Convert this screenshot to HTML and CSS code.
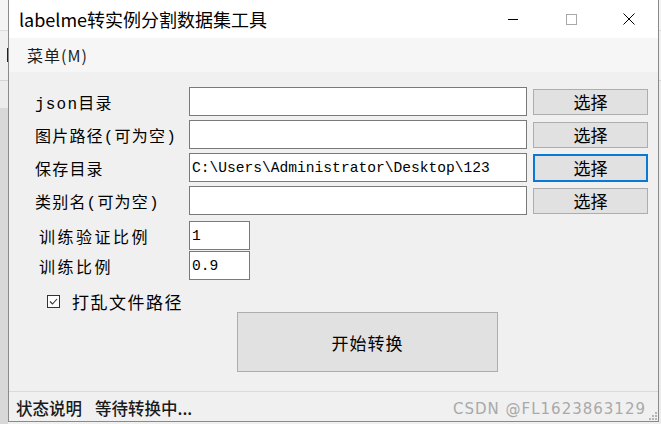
FILE: index.html
```html
<!DOCTYPE html>
<html lang="zh-CN">
<head>
<meta charset="utf-8">
<title>labelme转实例分割数据集工具</title>
<link rel="stylesheet" href="styles.css">
</head>
<body>
<div class="screen">
  <div class="edge-left"><span class="edge-mark"></span></div>
  <div class="window">
    <div class="titlebar">
      <span class="title">labelme转实例分割数据集工具</span>
      <div class="controls">
        <span class="ctl"><svg width="10" height="10" viewBox="0 0 10 10"><path d="M0 5.5H10" stroke="#000" stroke-width="1"/></svg></span>
        <span class="ctl"><svg width="11" height="11" viewBox="0 0 11 11"><rect x="0.5" y="0.5" width="10" height="10" fill="none" stroke="#a8a8a8" stroke-width="1"/></svg></span>
        <span class="ctl"><svg width="12" height="12" viewBox="0 0 12 12"><path d="M0.5 0.5L11.5 11.5M11.5 0.5L0.5 11.5" stroke="#000" stroke-width="1"/></svg></span>
      </div>
    </div>
    <div class="menubar"><span class="menu">菜单(M)</span></div>
    <div class="client">
      <div class="paths">
        <span class="label">json目录</span>
        <input class="field" type="text" value="">
        <button class="btn">选择</button>

        <span class="label">图片路径(可为空)</span>
        <input class="field" type="text" value="">
        <button class="btn">选择</button>

        <span class="label">保存目录</span>
        <input class="field" type="text" value="C:\Users\Administrator\Desktop\123">
        <button class="btn focus">选择</button>

        <span class="label">类别名(可为空)</span>
        <input class="field" type="text" value="">
        <button class="btn">选择</button>
      </div>
      <div class="ratios">
        <span class="label wide">训练验证比例</span>
        <input class="field small" type="text" value="1">
        <span class="label wide">训练比例</span>
        <input class="field small" type="text" value="0.9">
      </div>
      <div class="check">
        <svg class="box" width="13" height="13" viewBox="0 0 13 13"><rect x="0.5" y="0.5" width="12" height="12" fill="#fff" stroke="#333" stroke-width="1"/><path d="M3 6.5L5.5 9L10 4" fill="none" stroke="#333" stroke-width="1.1"/></svg>
        <span class="check-text">打乱文件路径</span>
      </div>
      <div class="start-row"><button class="start">开始转换</button></div>
      <div class="status">
        <span class="status-key">状态说明</span>
        <span class="status-val">等待转换中...</span>
      </div>
    </div>
    <span class="watermark">CSDN @FL1623863129</span>
    <svg class="grip" width="10" height="10" viewBox="0 0 10 10">
      <rect x="7" y="1" width="2" height="2" fill="#b4b4b4"/>
      <rect x="4" y="4" width="2" height="2" fill="#b4b4b4"/>
      <rect x="7" y="4" width="2" height="2" fill="#b4b4b4"/>
      <rect x="1" y="7" width="2" height="2" fill="#b4b4b4"/>
      <rect x="4" y="7" width="2" height="2" fill="#b4b4b4"/>
      <rect x="7" y="7" width="2" height="2" fill="#b4b4b4"/>
    </svg>
  </div>
  <div class="edge-right"></div>
</div>
</body>
</html>
```
FILE: styles.css
```css
html, body {
  margin: 0;
  padding: 0;
}
body {
  width: 661px;
  height: 424px;
  overflow: hidden;
  background: #f0f0f0;
  font-family: "Noto Sans CJK SC", "Noto Sans", sans-serif;
  color: #000;
}
.screen {
  display: flex;
  height: 424px;
}
.edge-left {
  width: 8px;
  position: relative;
  background: linear-gradient(#f4f4f4 0 30px, #dcdcdc 30px 31px, #f0f0f0 31px 80px, #d4d4d4 80px 81px, #ececec 81px 108px, #d8d8d8 108px 424px);
}
.edge-mark {
  position: absolute;
  left: 7px;
  top: 48px;
  width: 1px;
  height: 14px;
  background: #222;
}
.edge-right {
  width: 2px;
  background: linear-gradient(#f4f4f4 0 30px, #dcdcdc 30px 31px, #f0f0f0 31px 80px, #d4d4d4 80px 81px, #ececec 81px 424px);
}
.window {
  position: relative;
  width: 651px;
  height: 422px;
  box-sizing: border-box;
  border: 1px solid #8a8a8a;
  border-top: none;
  background: #f0f0f0;
  display: flex;
  flex-direction: column;
}
.titlebar {
  height: 38px;
  flex: none;
  background: #fff;
  display: flex;
  align-items: center;
}
.title {
  flex: 1;
  padding-left: 10px;
  font-size: 18px;
  line-height: 22px;
  color: #000;
}
.controls {
  display: flex;
  align-self: stretch;
}
.ctl {
  width: 58px;
  display: flex;
  align-items: center;
  justify-content: center;
}
.ctl svg {
  display: block;
}
.menubar {
  height: 34px;
  flex: none;
  background: #f6f6f6;
  display: flex;
  align-items: center;
  padding-left: 18px;
}
.menu {
  font-size: 16px;
  letter-spacing: 1px;
  color: #1e1e1e;
}
.client {
  flex: 1;
  display: flex;
  flex-direction: column;
}
.paths {
  display: grid;
  grid-template-columns: 154px 338px 121px;
  grid-auto-rows: 29px;
  row-gap: 4px;
  align-items: center;
  margin: 15px 0 0 26px;
}
.label {
  font-family: "Liberation Mono", "Noto Sans CJK SC", monospace;
  font-size: 16px;
  letter-spacing: 1.2px;
  color: #000;
  white-space: nowrap;
}
.label.wide {
  letter-spacing: 2.5px;
}
.field {
  box-sizing: border-box;
  height: 29px;
  width: 338px;
  margin: 0;
  border: 1px solid #7a7a7a;
  border-radius: 0;
  background: #fff;
  padding: 0 2px;
  font-family: "Liberation Mono", monospace;
  font-size: 14.6px;
  color: #000;
  outline: none;
}
.field.small {
  width: 61px;
}
.btn {
  box-sizing: border-box;
  justify-self: end;
  width: 115px;
  height: 26px;
  margin: 0;
  padding: 0;
  background: #e1e1e1;
  border: 1px solid #adadad;
  border-radius: 0;
  font-family: "Noto Sans CJK SC", sans-serif;
  font-size: 17px;
  line-height: 24px;
  color: #000;
}
.btn.focus {
  height: 28px;
  border: 2px solid #0a78d7;
  line-height: 24px;
}
.ratios {
  display: grid;
  grid-template-columns: 150px 61px;
  grid-auto-rows: 29px;
  row-gap: 1px;
  align-items: center;
  margin: 6px 0 0 30px;
}
.check {
  display: flex;
  align-items: center;
  height: 20px;
  margin: 11px 0 0 38px;
}
.box {
  display: block;
  flex: none;
}
.check-text {
  margin-left: 12px;
  font-size: 17px;
  letter-spacing: 1.5px;
  color: #000;
}
.start-row {
  display: flex;
  margin: 1px 0 0 228px;
}
.start {
  box-sizing: border-box;
  width: 261px;
  height: 60px;
  margin: 0;
  padding: 0;
  background: #e1e1e1;
  border: 1px solid #adadad;
  border-radius: 0;
  font-family: "Noto Sans CJK SC", sans-serif;
  font-size: 17px;
  letter-spacing: 1px;
  color: #000;
}
.status {
  margin-top: auto;
  height: 30px;
  box-sizing: border-box;
  border-top: 1px solid #dadada;
  display: flex;
  align-items: center;
  padding: 2px 0 0 7px;
  font-size: 16.5px;
  font-weight: 500;
  color: #1a1a1a;
}
.status-val {
  margin-left: 13px;
}
.watermark {
  position: absolute;
  right: 12px;
  top: 399px;
  font-family: "DejaVu Sans", "Liberation Sans", sans-serif;
  font-size: 15px;
  letter-spacing: 1px;
  line-height: 20px;
  color: #a9a9a9;
}
.grip {
  position: absolute;
  right: 0;
  bottom: 0;
  display: block;
}
```
